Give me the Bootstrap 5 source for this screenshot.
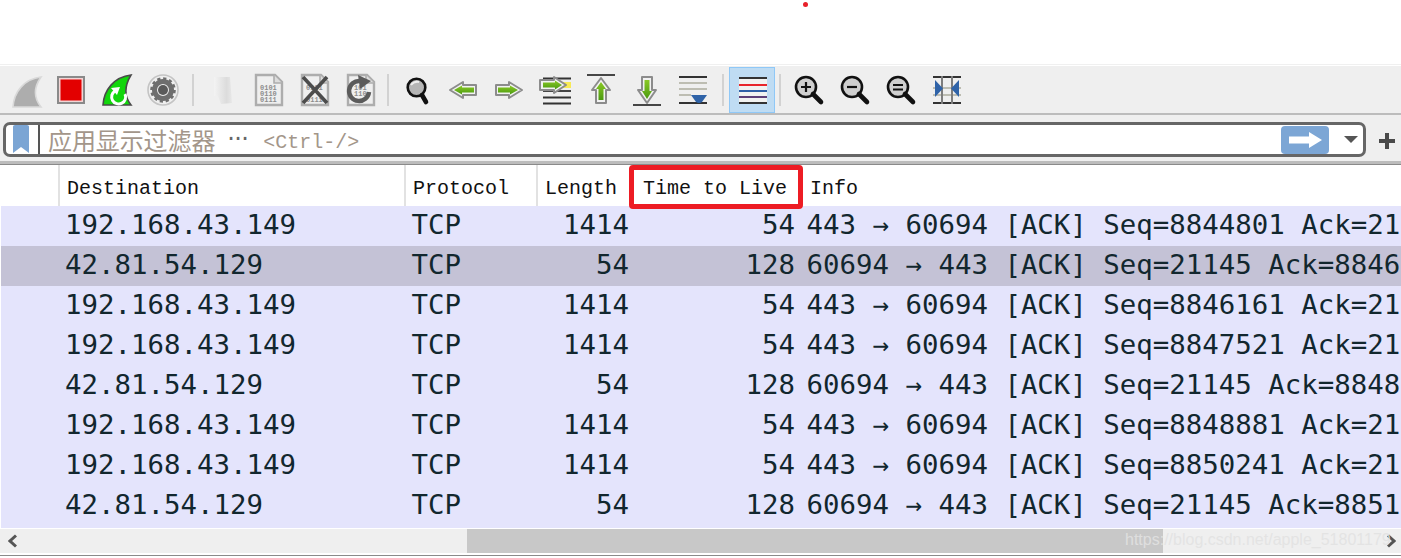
<!DOCTYPE html>
<html lang="zh">
<head>
<meta charset="utf-8">
<title>Wireshark</title>
<link href="https://cdn.jsdelivr.net/npm/bootstrap@5.3.0/dist/css/bootstrap.min.css" rel="stylesheet">
<style>
html,body{margin:0;background:#fff;overflow:hidden;width:1401px;height:558px}
.shot{position:relative;width:1401px;height:558px;overflow:hidden}
.topgap{height:65px;border-bottom:1px solid #f0f0f0}
.tools{height:50px;background:#efefef;border-top:1px solid #fff;border-bottom:2px solid #bcbcbc;padding-left:4px}
.slot{width:46px;height:46px;flex:none;display:block}
.sep{flex:none;display:flex;justify-content:center;align-items:center}
.sep::before{content:"";width:2px;height:32px;background:#d2d2d2}
.sep9{width:9px}.sep13{width:13px}.sep10{width:10px}
.slot-on{background:#bfdcf3;box-shadow:inset 0 0 0 1px #8fc8f7}
.fbar{height:46px;background:#efefef;padding:7px 0 0 3px}
.fbox{width:1363px;height:35px;border:3px solid #666;border-radius:7px;background:#fff;padding-left:7px}
.bmk{width:16px;height:29px;flex:none;margin-right:9px}
.fdiv{width:2px;height:29px;background:#555;flex:none;margin-right:8px}
.ph{font-family:"Liberation Mono",monospace;font-size:20px;color:#a3968a;white-space:pre;line-height:29px;margin-top:5px}
.ph-cjk{font-family:"Noto Sans CJK SC",sans-serif;font-size:24px;margin-right:12px;margin-top:0;letter-spacing:-.1px}
.ph-dots{font-family:"DejaVu Sans",sans-serif;font-size:24px;color:#666;margin-right:14px;width:22px;letter-spacing:-.6px;margin-top:0}
.go{width:48px;height:28px;background:#7ca6d5;border-radius:4px;flex:none;margin-left:auto;margin-right:15px}
.tri{width:0;height:0;border:7px solid transparent;border-top:7px solid #555;border-bottom:0;flex:none;margin-right:5px}
.plus{width:34px;height:35px;flex:none}
.rule{height:3px;background:#bcbcbc;border-bottom:1px solid #8a8a8a;box-sizing:content-box}
.grid6{display:grid;grid-template-columns:58px 346px 132px 96px 170px 1fr}
.thead{height:41px;font-family:"Liberation Mono",monospace;font-size:20px;color:#111;line-height:34px;white-space:pre}
.thead>div{border-left:2px solid #e2e2e2;padding-top:7px}
.thead>div:first-child{border-left:0}
.thead>div:nth-child(2){padding-left:7px}
.thead>div:nth-child(3){padding-left:7px}
.thead>div:nth-child(4){padding-left:7px}
.thead>div:nth-child(5){padding-left:11px;border-left:0}
.thead>div:nth-child(6){padding-left:8px;border-left:0}
.rows{margin-left:1px;height:322px;background:#e4e4fc;margin-bottom:1px}
.pkt{height:40px;grid-template-columns:57px 346px 132px 96px 170px 1fr;background:#e4e4fc;color:#12272e;font-family:"DejaVu Sans Mono",monospace;font-size:27.4px;line-height:38px;white-space:pre;overflow:hidden}
.pkt-sel{background:#c4c2d6}
.pkt>div{overflow:hidden}
.pkt>div:nth-child(2){padding-left:7px}
.pkt>div:nth-child(3){padding-left:7.5px}
.pkt>div:nth-child(4){text-align:right;padding-right:3px}
.pkt>div:nth-child(5){text-align:right;padding-right:7px}
.pkt>div:nth-child(6){padding-left:4.5px}
.hscroll{height:24px;background:#efefef;padding:0 5px 0 8px}
.thumb-track{flex:1;height:24px;padding-left:450px;padding-right:224px}
.thumbbar{height:24px;background:#c8c8c8}
.hend{height:2px;border-bottom:1px solid #8a8a8a;box-sizing:content-box}
.annot{position:absolute;left:629px;top:165px;width:174px;height:44px;border:5px solid #ed1c24;border-radius:4px}
.dot{position:absolute;left:803px;top:2px;width:5px;height:5px;border-radius:50%;background:#e8202a}
.wm{position:absolute;left:1125px;top:528px;font-family:"Liberation Sans",sans-serif;font-size:16px;line-height:24px;color:rgba(226,226,226,.9);white-space:pre}
svg text{font-family:"Liberation Mono",monospace;font-size:7px;font-weight:700;fill:#8d8d8d}
</style>
</head>
<body>
<div class="shot">
  <div class="topgap"></div>

  <svg width="0" height="0" class="d-block position-absolute">
    <defs>
      <linearGradient id="grn" x1="0" x2="0" y1="0" y2="1"><stop offset="0" stop-color="#8ac926"/><stop offset="1" stop-color="#4b9a10"/></linearGradient>
      <g id="fileb">
        <path d="M254 75H273L280 82V105H254Z" fill="#efefef" stroke="#adadad" stroke-width="2.4"/>
        <path d="M272 75V83H280" fill="#ddd" stroke="#adadad" stroke-width="1.6"/>
      </g>
      <g id="lens">
        <circle cx="0" cy="0" r="10" fill="#cfcfcf" stroke="#111" stroke-width="2.6"/>
        <path d="M7 7L15 15" stroke="#111" stroke-width="4.6" stroke-linecap="round"/>
      </g>
    </defs>
  </svg>

  <div class="tools d-flex align-items-center">
    <!-- fin -->
    <svg class="slot" viewBox="4 67 46 46"><path d="M13 107C14 92 24 79 41 77C34 87 33 97 41 107Z" fill="#adadad" stroke="#d9d9d9" stroke-width="1.6"/></svg>
    <!-- stop -->
    <svg class="slot" viewBox="50 67 46 46"><rect x="58" y="77" width="26" height="26" fill="#f2d5d5" stroke="#8a8a8a" stroke-width="2"/><rect x="60.5" y="79.5" width="21" height="21" fill="#e30000"/></svg>
    <!-- restart -->
    <svg class="slot" viewBox="96 67 46 46"><path d="M103 105C104 90 114 77 131 75C125 85 123 95 131 105Z" fill="#12d60c" stroke="#4a4a4a" stroke-width="1.6"/><path d="M125 94A7 7 0 1 1 115 91" fill="none" stroke="#fff" stroke-width="3"/><path d="M111 88L120 87L117 95Z" fill="#fff"/></svg>
    <!-- gear -->
    <svg class="slot" viewBox="142 67 46 46"><circle cx="163" cy="90" r="15" fill="#efefef" stroke="#c4c4c4" stroke-width="1.6"/><circle cx="163" cy="90" r="8.5" fill="none" stroke="#6e6e6e" stroke-width="5"/><circle cx="163" cy="90" r="11.5" fill="none" stroke="#6e6e6e" stroke-width="2.6" stroke-dasharray="3.2 2.8"/><circle cx="163" cy="90" r="5" fill="#5a5a5a"/></svg>
    <span class="sep sep9"></span>
    <!-- disabled bookmark -->
    <svg class="slot" viewBox="195 67 46 46"><defs><linearGradient id="fade" x1="0" x2="1" y1="0" y2="0"><stop offset="0" stop-color="#f3f3f3"/><stop offset=".7" stop-color="#dcdcdc"/><stop offset="1" stop-color="#e8e8e8"/></linearGradient></defs><path d="M212 77H228L230 103L219 104L216 96L212 96Z" fill="url(#fade)"/></svg>
    <!-- file -->
    <svg class="slot" viewBox="241 67 46 46"><use href="#fileb"/><text x="258" y="90">0101</text><text x="258" y="96">0110</text><text x="258" y="102">0111</text></svg>
    <!-- close -->
    <svg class="slot" viewBox="287 67 46 46"><use href="#fileb" x="46"/><text x="304" y="90">0101</text><text x="304" y="102">0111</text><path d="M301 77L325 103M325 77L301 103" stroke="#4c4c4c" stroke-width="3.6"/></svg>
    <!-- reload -->
    <svg class="slot" viewBox="333 67 46 46"><use href="#fileb" x="92"/><text x="352" y="90">101</text><text x="352" y="96">110</text><path d="M367 92A10 10 0 1 1 358 81" fill="none" stroke="#5b5b5b" stroke-width="4.4"/><path d="M356 75L369 81L358 89Z" fill="#5b5b5b"/></svg>
    <span class="sep sep13"></span>
    <!-- search -->
    <svg class="slot" viewBox="394 67 46 46"><circle cx="416.500" cy="87.500" r="8.800" fill="#b5b5b5" stroke="#111" stroke-width="2.6"/><path d="M411 85Q414 81 419 82" stroke="#eee" stroke-width="2" fill="none"/><path d="M422 95L426 102" stroke="#111" stroke-width="4.6" stroke-linecap="round"/></svg>
    <!-- left -->
    <svg class="slot" viewBox="440 67 46 46"><path d="M450 90L463 82V85H476V95H463V98Z" fill="#f2f2f2" stroke="#8c8c8c" stroke-width="2" stroke-linejoin="round"/><path d="M454 90L462 85.5V87.5H474V92.5H462V94.5Z" fill="url(#grn)"/></svg>
    <!-- right -->
    <svg class="slot" viewBox="486 67 46 46"><path d="M522 90L509 82V85H496V95H509V98Z" fill="#f2f2f2" stroke="#8c8c8c" stroke-width="2" stroke-linejoin="round"/><path d="M518 90L510 85.5V87.5H498V92.5H510V94.5Z" fill="url(#grn)"/></svg>
    <!-- goto -->
    <svg class="slot" viewBox="532 67 46 46"><path d="M543 78.500H571M543 97.500H571M543 103.500H571" stroke="#333" stroke-width="1.8"/><rect x="560" y="82" width="11" height="6" fill="#f8ea55"/><path d="M543 91H571" stroke="#333" stroke-width="1.8"/><path d="M566 85L554 77V80H540V90H554V93Z" fill="#f2f2f2" stroke="#8c8c8c" stroke-width="2" stroke-linejoin="round"/><path d="M562 85L555 80.500V82.500H543V87.500H555V89.500Z" fill="url(#grn)"/></svg>
    <!-- up -->
    <svg class="slot" viewBox="578 67 46 46"><path d="M587 75H615" stroke="#333" stroke-width="1.8"/><path d="M601 78L610 90H606V103H596V90H592Z" fill="#f2f2f2" stroke="#8c8c8c" stroke-width="2" stroke-linejoin="round"/><path d="M601 82L606 89H603.500V100H598.500V89H596Z" fill="url(#grn)"/></svg>
    <!-- down -->
    <svg class="slot" viewBox="624 67 46 46"><path d="M633 105H661" stroke="#333" stroke-width="1.8"/><path d="M647 103L656 90H652V77H642V90H638Z" fill="#f2f2f2" stroke="#8c8c8c" stroke-width="2" stroke-linejoin="round"/><path d="M647 99L652 91H649.500V80H644.500V91H642Z" fill="url(#grn)"/></svg>
    <!-- scroll end -->
    <svg class="slot" viewBox="670 67 46 46"><path d="M679 77H707M679 103H707" stroke="#333" stroke-width="1.8"/><path d="M679 83H707M679 89H707M679 95H691" stroke="#bdbdb2" stroke-width="1.8"/><path d="M691 95H707L702 102Q699 104 696 102Z" fill="#2f63a8"/></svg>
    <span class="sep sep13"></span>
    <!-- colorize, active -->
    <svg class="slot slot-on" viewBox="729 67 46 46"><rect x="739" y="77" width="28" height="27" fill="#f2f2f0"/><path d="M739 78H767M739 103H767" stroke="#333" stroke-width="2"/><path d="M739 85H767" stroke="#e8262b" stroke-width="2"/><path d="M739 91H767" stroke="#2f5fa6" stroke-width="2"/><path d="M739 97H767" stroke="#5e3f77" stroke-width="2"/></svg>
    <span class="sep sep10"></span>
    <!-- zoom in -->
    <svg class="slot" viewBox="785 67 46 46"><use href="#lens" transform="translate(806 87)"/><path d="M801 87H811M806 82V92" stroke="#111" stroke-width="2.2"/></svg>
    <!-- zoom out -->
    <svg class="slot" viewBox="831 67 46 46"><use href="#lens" transform="translate(852 87)"/><path d="M847 87H857" stroke="#111" stroke-width="2.2"/></svg>
    <!-- zoom reset -->
    <svg class="slot" viewBox="877 67 46 46"><use href="#lens" transform="translate(898 87)"/><path d="M893 85H903M893 89.500H903" stroke="#111" stroke-width="2.2"/></svg>
    <!-- resize -->
    <svg class="slot" viewBox="923 67 46 46"><path d="M933 77H961M933 103H961" stroke="#333" stroke-width="1.8"/><path d="M933 88H961M933 95H961" stroke="#bdbdb2" stroke-width="1.8"/><path d="M942 76V104M952 76V104" stroke="#7d7d7d" stroke-width="2"/><path d="M935 80L943 88.500L935 97Z" fill="#2f63a8"/><path d="M959 80L951 88.500L959 97Z" fill="#2f63a8"/></svg>
  </div>

  <div class="fbar d-flex align-items-start">
    <div class="fbox d-flex align-items-center">
      <svg class="bmk" viewBox="0 0 16 29"><path d="M0 1.500Q0 0 2 0H14Q16 0 16 1.500V28L8 22L0 28Z" fill="#7ba5d4"/></svg>
      <span class="fdiv"></span>
      <span class="ph ph-cjk">应用显示过滤器</span><span class="ph ph-dots">···</span><span class="ph">&lt;Ctrl-/&gt;</span>
      <svg class="go" viewBox="0 0 48 28"><path d="M8 10.500H28V6L41 14L28 22V17.500H8Z" fill="#fff"/></svg>
      <span class="tri"></span>
    </div>
    <svg class="plus" viewBox="0 0 34 35"><path d="M13 19H29M21 11V27" stroke="#4a4a4a" stroke-width="4"/></svg>
  </div>
  <div class="rule"></div>

  <div class="grid6 thead">
    <div></div><div>Destination</div><div>Protocol</div><div>Length</div><div>Time to Live</div><div>Info</div>
  </div>

  <div class="rows">
    <div class="pkt grid6"><div></div><div>192.168.43.149</div><div>TCP</div><div>1414</div><div>54</div><div>443 → 60694 [ACK] Seq=8844801 Ack=21</div></div>
    <div class="pkt pkt-sel grid6"><div></div><div>42.81.54.129</div><div>TCP</div><div>54</div><div>128</div><div>60694 → 443 [ACK] Seq=21145 Ack=8846</div></div>
    <div class="pkt grid6"><div></div><div>192.168.43.149</div><div>TCP</div><div>1414</div><div>54</div><div>443 → 60694 [ACK] Seq=8846161 Ack=21</div></div>
    <div class="pkt grid6"><div></div><div>192.168.43.149</div><div>TCP</div><div>1414</div><div>54</div><div>443 → 60694 [ACK] Seq=8847521 Ack=21</div></div>
    <div class="pkt grid6"><div></div><div>42.81.54.129</div><div>TCP</div><div>54</div><div>128</div><div>60694 → 443 [ACK] Seq=21145 Ack=8848</div></div>
    <div class="pkt grid6"><div></div><div>192.168.43.149</div><div>TCP</div><div>1414</div><div>54</div><div>443 → 60694 [ACK] Seq=8848881 Ack=21</div></div>
    <div class="pkt grid6"><div></div><div>192.168.43.149</div><div>TCP</div><div>1414</div><div>54</div><div>443 → 60694 [ACK] Seq=8850241 Ack=21</div></div>
    <div class="pkt grid6"><div></div><div>42.81.54.129</div><div>TCP</div><div>54</div><div>128</div><div>60694 → 443 [ACK] Seq=21145 Ack=8851</div></div>
  </div>

  <div class="hscroll d-flex align-items-center">
    <svg width="9" height="14" viewBox="0 0 9 14" class="flex-shrink-0"><path d="M8 1.500L2 7L8 12.500" fill="none" stroke="#555" stroke-width="3"/></svg>
    <div class="thumb-track"><div class="thumbbar"></div></div>
    <svg width="9" height="14" viewBox="0 0 9 14" class="flex-shrink-0"><path d="M1 1.500L7 7L1 12.500" fill="none" stroke="#555" stroke-width="3"/></svg>
  </div>
  <div class="hend"></div>

  <div class="annot"></div>
  <div class="dot"></div>
  <div class="wm">https://blog.csdn.net/apple_51801179</div>
</div>
<script src="https://cdn.jsdelivr.net/npm/bootstrap@5.3.0/dist/js/bootstrap.bundle.min.js"></script>
</body>
</html>
